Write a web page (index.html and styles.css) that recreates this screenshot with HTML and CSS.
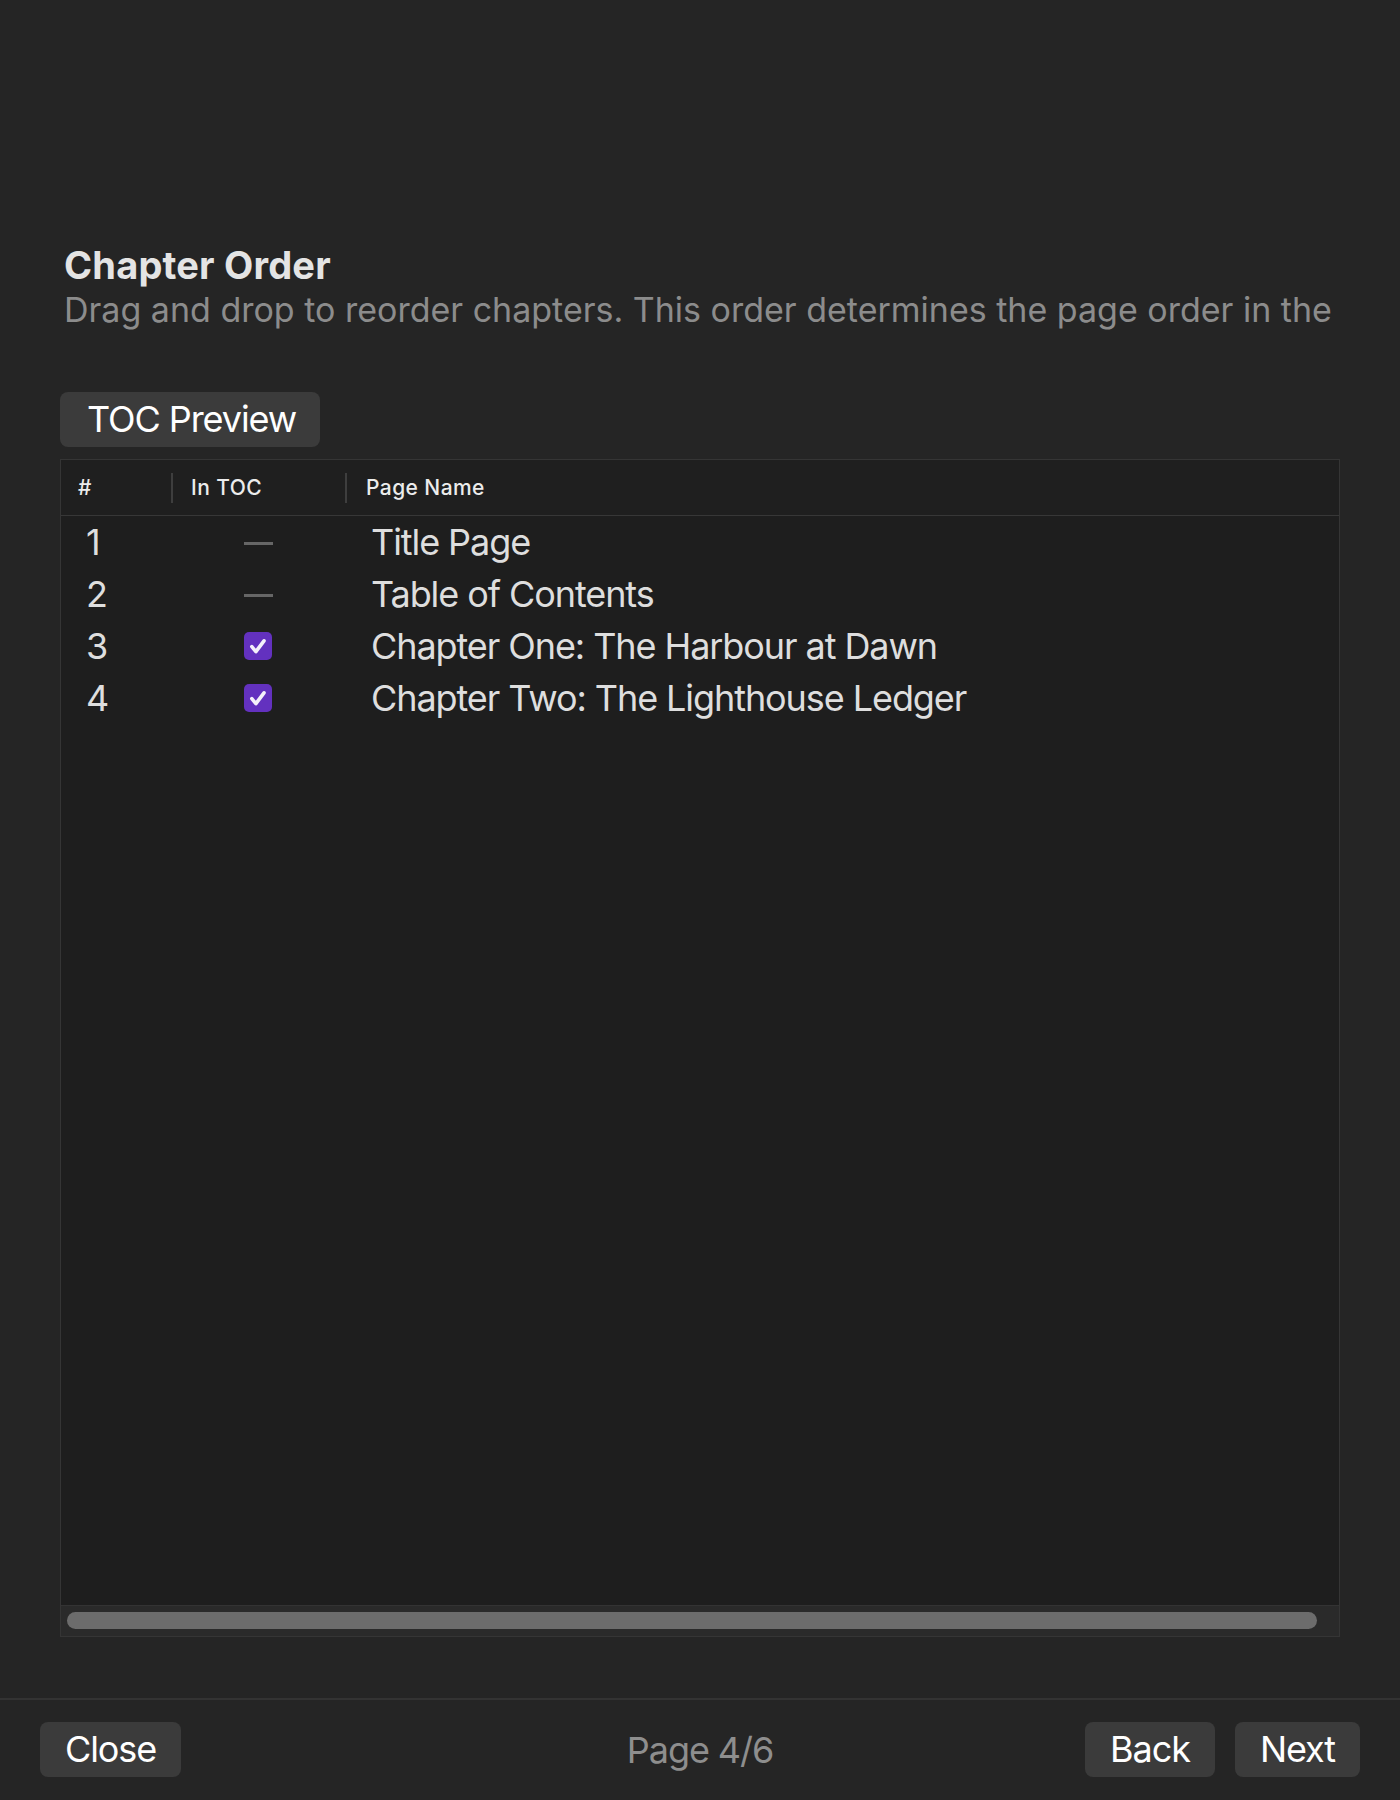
FILE: index.html
```html
<!DOCTYPE html>
<html lang="en">
<head>
<meta charset="utf-8">
<title>Chapter Order</title>
<link rel="stylesheet" href="styles.css">
</head>
<body>
<div class="page">
  <main class="content">
    <h1 class="title">Chapter Order</h1>
    <p class="subtitle">Drag and drop to reorder chapters. This order determines the page order in the</p>
    <button class="btn toc-btn" type="button">TOC Preview</button>
    <div class="table">
      <div class="thead">
        <div class="th col-num">#</div>
        <div class="th col-toc">In TOC</div>
        <div class="th col-name">Page Name</div>
      </div>
      <div class="tbody">
        <div class="tr">
          <div class="td col-num">1</div>
          <div class="td col-toc"><span class="dash"></span></div>
          <div class="td col-name">Title Page</div>
        </div>
        <div class="tr">
          <div class="td col-num">2</div>
          <div class="td col-toc"><span class="dash"></span></div>
          <div class="td col-name">Table of Contents</div>
        </div>
        <div class="tr">
          <div class="td col-num">3</div>
          <div class="td col-toc"><span class="check"><svg viewBox="0 0 28 28" width="28" height="28"><polyline points="7.8,14.6 11.9,19.6 20,8.8" fill="none" stroke="#f4f0fa" stroke-width="3.6" stroke-linecap="round" stroke-linejoin="round"/></svg></span></div>
          <div class="td col-name">Chapter One: The Harbour at Dawn</div>
        </div>
        <div class="tr">
          <div class="td col-num">4</div>
          <div class="td col-toc"><span class="check"><svg viewBox="0 0 28 28" width="28" height="28"><polyline points="7.8,14.6 11.9,19.6 20,8.8" fill="none" stroke="#f4f0fa" stroke-width="3.6" stroke-linecap="round" stroke-linejoin="round"/></svg></span></div>
          <div class="td col-name">Chapter Two: The Lighthouse Ledger</div>
        </div>
      </div>
      <div class="hscroll"><div class="thumb"></div></div>
    </div>
  </main>
  <footer class="footer">
    <div class="footer-left"><button class="btn" type="button">Close</button></div>
    <div class="page-indicator">Page 4/6</div>
    <div class="footer-right">
      <button class="btn" type="button">Back</button>
      <button class="btn" type="button">Next</button>
    </div>
  </footer>
</div>
</body>
</html>
```

FILE: styles.css
```css
* { box-sizing: border-box; }
html, body {
  margin: 0;
  padding: 0;
  background: #252525;
}
body {
  font-family: Inter, "Noto Sans", "Liberation Sans", sans-serif;
  color: #e6e6e6;
}
.page {
  display: flex;
  flex-direction: column;
  height: 1800px;
  width: 1400px;
  overflow: hidden;
}
.content {
  flex: 1;
  padding: 242px 60px 0 60px;
  display: flex;
  flex-direction: column;
  align-items: flex-start;
}
.title {
  margin: 0 0 0 4px;
  font-size: 38px;
  line-height: 46px;
  font-weight: 700;
  color: #e4e4e4;
  letter-spacing: 0.005em;
}
.subtitle {
  margin: 2px 0 0 4px;
  white-space: nowrap;
  font-size: 34px;
  line-height: 40px;
  color: #8c8c8c;
  letter-spacing: 0;
}
.btn {
  font-family: inherit;
  font-size: 36px;
  line-height: 55px;
  height: 55px;
  padding: 0 25px;
  border: none;
  border-radius: 8px;
  background: #3b3b3b;
  color: #ffffff;
  letter-spacing: -0.03em;
}
.toc-btn {
  margin-top: 62px;
  padding: 0 24px 0 27px;
}
.table {
  margin-top: 12px;
  width: 1280px;
  height: 1178px;
  border: 1px solid #353535;
  background: #1e1e1e;
  display: flex;
  flex-direction: column;
}
.thead {
  display: flex;
  height: 56px;
  border-bottom: 1px solid #373737;
  background: #1f1f1f;
}
.th {
  position: relative;
  font-size: 21px;
  line-height: 55px;
  font-weight: 500;
  color: #ececec;
  padding-left: 17px;
  letter-spacing: 0.02em;
}
.th + .th::before {
  content: "";
  position: absolute;
  left: 0;
  top: 13px;
  height: 30px;
  width: 2px;
  background: #3e3e3e;
}
.col-num { width: 110px; flex: none; }
.col-toc { width: 174px; flex: none; }
.col-name { flex: 1; }
.th.col-toc { padding-left: 20px; }
.th.col-name { padding-left: 21px; }
.tbody {
  flex: 1;
}
.tr {
  display: flex;
  height: 52px;
  align-items: center;
}
.td {
  font-size: 36px;
  line-height: 52px;
  color: #dedede;
  letter-spacing: -0.03em;
}
.td.col-num { padding-left: 25px; }
.td.col-toc {
  display: flex;
  justify-content: center;
  align-items: center;
  height: 52px;
}
.td.col-name { padding-left: 26px; white-space: nowrap; }
.dash {
  display: block;
  width: 29px;
  height: 3px;
  background: #666666;
  margin-top: 2px;
}
.check {
  display: block;
  width: 28px;
  height: 28px;
  border-radius: 5px;
  background: #6331bf;
}
.check svg { display: block; }
.hscroll {
  height: 31px;
  border-top: 1px solid #333333;
  background: #2a2a2a;
  padding: 6px 22px 0 6px;
}
.thumb {
  height: 17px;
  border-radius: 9px;
  background: #6c6c6c;
}
.footer {
  border-top: 2px solid #333333;
  display: grid;
  grid-template-columns: 1fr auto 1fr;
  align-items: center;
  padding: 22px 40px 23px 40px;
}
.footer-left { display: flex; }
.footer-right { display: flex; justify-content: flex-end; gap: 20px; }
.page-indicator {
  font-size: 36px;
  color: #8e8e8e;
  letter-spacing: -0.03em;
}
```
